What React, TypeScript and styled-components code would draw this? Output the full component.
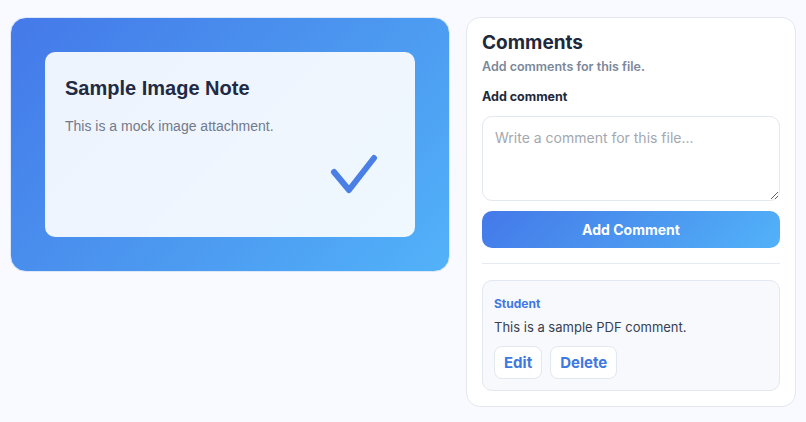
import React from "react";
import styled, {createGlobalStyle} from "styled-components";

const GlobalStyle = createGlobalStyle`
    * {
        box-sizing: border-box;
    }

    body {
        margin: 0;
        background: #f8faff;
        font-family: "Inter", "Noto Sans", sans-serif;
    }
`

const blueGradient = "linear-gradient(135deg, #4479e9 0%, #4b95ef 50%, #52b2f9 100%)"

export default function App() {
    return (
        <>
            <GlobalStyle/>
            <Page>
                <Preview>
                    <NoteCard>
                        <NoteTitle>Sample Image Note</NoteTitle>
                        <NoteText>This is a mock image attachment.</NoteText>
                        <CheckMark width="56" height="48" viewBox="0 0 56 48">
                            <polyline points="8,21 23,39 48,7" fill="none" stroke="#4a7fe6"
                                      strokeWidth="6" strokeLinecap="round" strokeLinejoin="round"/>
                        </CheckMark>
                    </NoteCard>
                </Preview>

                <Panel>
                    <PanelTitle>Comments</PanelTitle>
                    <PanelSubtitle>Add comments for this file.</PanelSubtitle>
                    <FieldLabel>Add comment</FieldLabel>
                    <CommentInput placeholder="Write a comment for this file..."/>
                    <PrimaryBtn>Add Comment</PrimaryBtn>
                    <Divider/>
                    <CommentCard>
                        <Author>Student</Author>
                        <CommentBody>This is a sample PDF comment.</CommentBody>
                        <Actions>
                            <GhostBtn>Edit</GhostBtn>
                            <GhostBtn>Delete</GhostBtn>
                        </Actions>
                    </CommentCard>
                </Panel>
            </Page>
        </>
    )
}

const Page = styled.div`
    display: grid;
    grid-template-columns: 440px 330px;
    gap: 16px;
    align-items: start;
    padding: 17px 10px;
`

const Preview = styled.div`
    padding: 34px;
    border-radius: 16px;
    border: 1px solid #dde7f7;
    background: ${blueGradient};
`

const NoteCard = styled.div`
    display: flex;
    flex-direction: column;
    height: 185px;
    padding: 24px 20px;
    border-radius: 10px;
    background: rgba(255, 255, 255, 0.91);
    font-family: "Liberation Sans", Arial, sans-serif;
`

const NoteTitle = styled.h2`
    margin: 0;
    font-size: 20px;
    line-height: 24px;
    font-weight: 700;
    color: #1f2a44;
`

const NoteText = styled.p`
    margin: 16px 0 0;
    font-size: 14px;
    line-height: 20px;
    color: #717a8b;
`

const CheckMark = styled.svg`
    display: block;
    margin: auto 13px 14px auto;
`

const Panel = styled.div`
    display: flex;
    flex-direction: column;
    padding: 13px 15px 15px;
    border-radius: 14px;
    border: 1px solid #e3e8f0;
    background: #ffffff;
`

const PanelTitle = styled.h2`
    margin: 0;
    font-size: 19px;
    line-height: 24px;
    font-weight: 700;
    color: #1e293b;
`

const PanelSubtitle = styled.p`
    margin: 3px 0 0;
    font-size: 12.5px;
    line-height: 18px;
    font-weight: 600;
    color: #7b879b;
`

const FieldLabel = styled.label`
    margin-top: 12px;
    font-size: 12.5px;
    line-height: 18px;
    font-weight: 700;
    color: #1e293b;
`

const CommentInput = styled.textarea`
    margin-top: 10px;
    height: 85px;
    padding: 11px 12px;
    border-radius: 10px;
    border: 1px solid #e2e8f0;
    font-family: "Inter", sans-serif;
    font-size: 14px;
    line-height: 20px;
    color: #1e293b;
    resize: vertical;
    outline: none;

    &::placeholder {
        color: #a3a8b0;
    }
`

const PrimaryBtn = styled.button`
    margin-top: 10px;
    height: 37px;
    border: none;
    border-radius: 10px;
    background: ${blueGradient};
    color: #ffffff;
    font-family: "Inter", sans-serif;
    font-size: 14px;
    font-weight: 700;
    cursor: pointer;
`

const Divider = styled.div`
    height: 1px;
    margin: 15px 0 16px;
    background: #e5e9f0;
`

const CommentCard = styled.div`
    display: flex;
    flex-direction: column;
    padding: 13px 11px 11px;
    border-radius: 10px;
    border: 1px solid #e2e8f0;
    background: #f7f9fd;
`

const Author = styled.span`
    font-size: 12px;
    line-height: 20px;
    font-weight: 700;
    color: #3f78e0;
`

const CommentBody = styled.p`
    margin: 3px 0 0;
    font-size: 13px;
    line-height: 20px;
    color: #374151;
`

const Actions = styled.div`
    display: flex;
    gap: 8px;
    margin-top: 9px;
`

const GhostBtn = styled.button`
    height: 33px;
    padding: 0 9px;
    border-radius: 8px;
    border: 1px solid #e2e8f0;
    background: #ffffff;
    color: #3f78e0;
    font-family: "Inter", sans-serif;
    font-size: 15px;
    font-weight: 700;
    cursor: pointer;
`
